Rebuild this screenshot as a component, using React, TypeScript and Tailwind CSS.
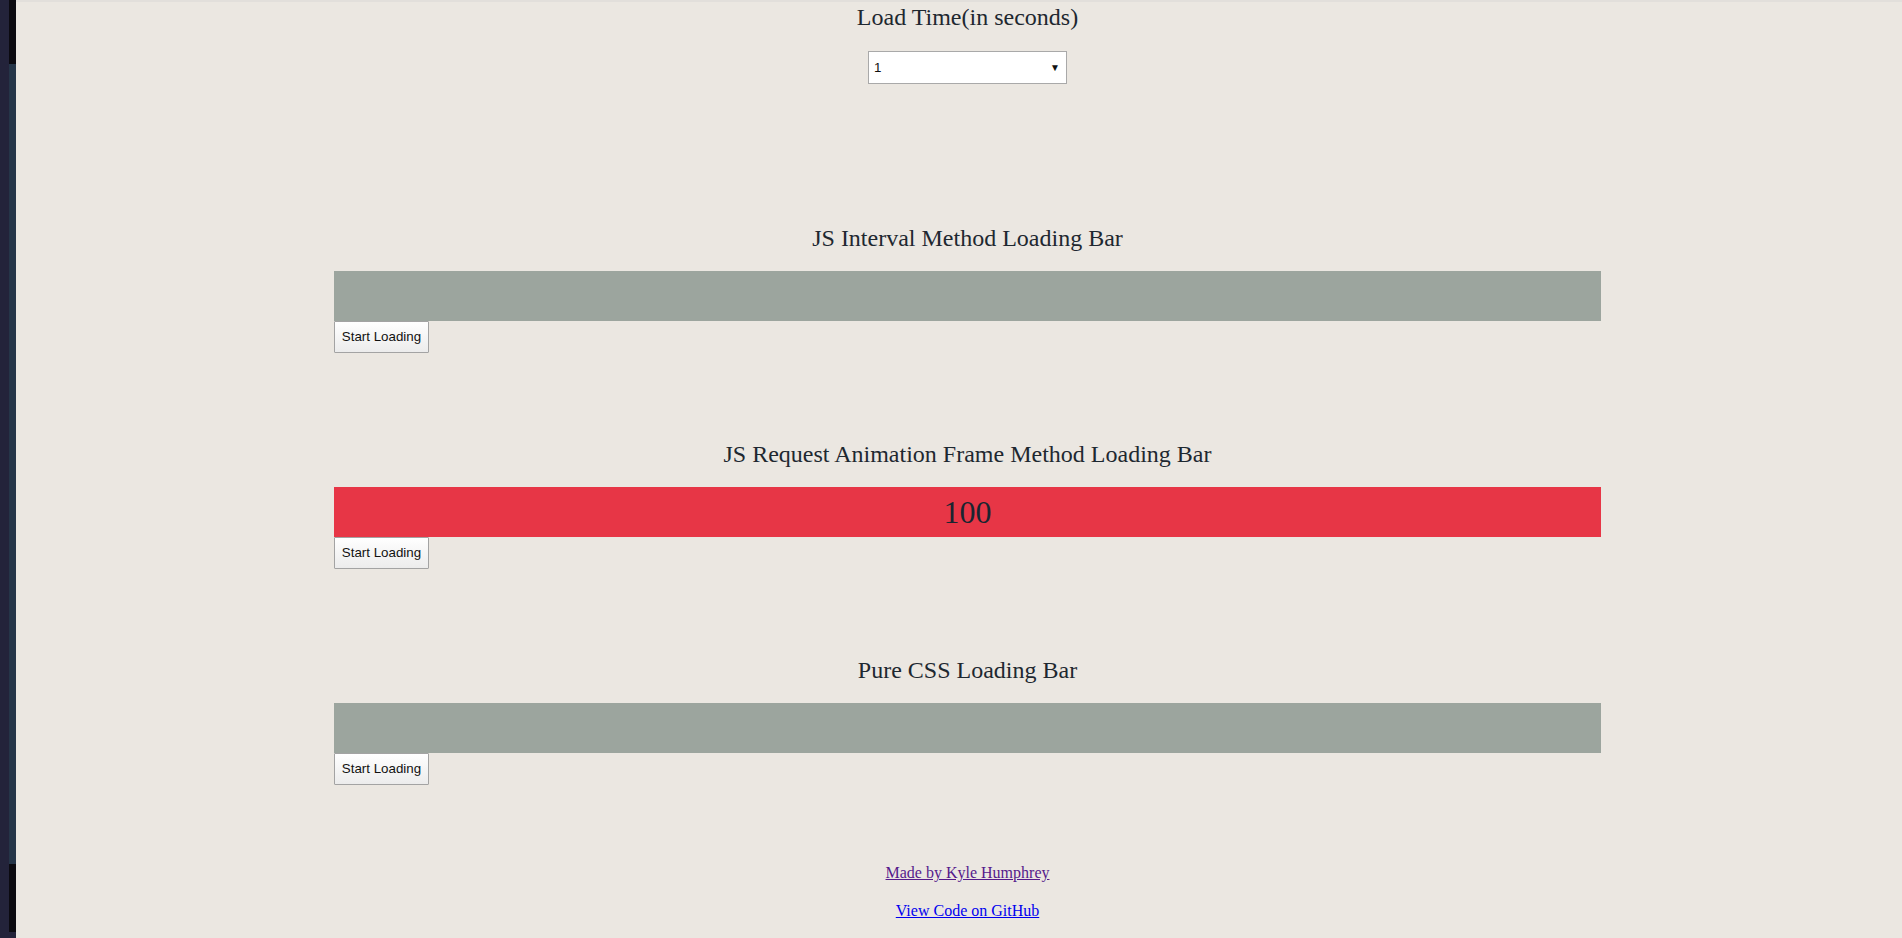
import React from "react";

const serif = { fontFamily: '"Liberation Serif", "Times New Roman", serif' };
const sans = { fontFamily: '"Liberation Sans", Arial, sans-serif' };

function StartButton() {
  return (
    <button
      className="h-[32px] w-[95px] border border-[#a3a3a3] bg-gradient-to-b from-[#ffffff] to-[#ececec] text-[13.33px] text-[#111111] leading-none rounded-[1px] self-start"
      style={sans}
    >
      Start Loading
    </button>
  );
}

function Section({ title, red, value }: { title: string; red?: boolean; value?: string }) {
  return (
    <div className="flex flex-col items-center w-[1267px]">
      <h2 className="h-[28px] text-[24px] leading-[28px] text-[#1e2830] font-normal" style={serif}>
        {title}
      </h2>
      <div
        className={
          "mt-[19px] h-[50px] w-full flex items-center justify-center " +
          (red ? "bg-[#e73646]" : "bg-[#9ca59e]")
        }
      >
        {value ? (
          <span className="text-[32px] leading-[37px] text-[#1a2530]" style={serif}>
            {value}
          </span>
        ) : null}
      </div>
      <StartButton />
    </div>
  );
}

export default function App() {
  return (
    <div className="flex h-[938px] w-full overflow-hidden bg-[#ebe7e1]">
      <div className="flex h-full shrink-0">
        <div className="w-[9px] h-full bg-[#23233a]" />
        <div className="w-[7px] h-full flex flex-col">
          <div className="h-[64px] bg-[#0b0a10]" />
          <div className="h-[800px] bg-[#253548]" />
          <div className="h-[68px] bg-[#0b0a10]" />
          <div className="flex-1 bg-[#23233a]" />
        </div>
      </div>
      <div className="flex-1 h-full border-t-2 border-[#e2dfdb] bg-[#ebe7e1] pl-[17px]">
        <div className="flex flex-col items-center">
          <h1 className="mt-[1px] h-[28px] text-[24px] leading-[28px] text-[#1e2830] font-normal" style={serif}>
            Load Time(in seconds)
          </h1>
          <div
            className="mt-[20px] h-[33px] w-[199px] bg-white border border-[#a9a9a9] flex items-center justify-between pl-[5px] pr-[6px] text-[13.33px] text-[#111111]"
            style={sans}
          >
            <span>1</span>
            <span className="text-[10px] leading-none">▼</span>
          </div>

          <div className="mt-[140px] flex flex-col gap-[87px]">
            <Section title="JS Interval Method Loading Bar" />
            <Section title="JS Request Animation Frame Method Loading Bar" red value="100" />
            <Section title="Pure CSS Loading Bar" />
          </div>

          <div className="mt-[79px] flex flex-col items-center gap-[20px] text-[16px] leading-[18px]" style={serif}>
            <a href="#" className="underline text-[#551a8b]">
              Made by Kyle Humphrey
            </a>
            <a href="#" className="underline text-[#0000ee]">
              View Code on GitHub
            </a>
          </div>
        </div>
      </div>
    </div>
  );
}
